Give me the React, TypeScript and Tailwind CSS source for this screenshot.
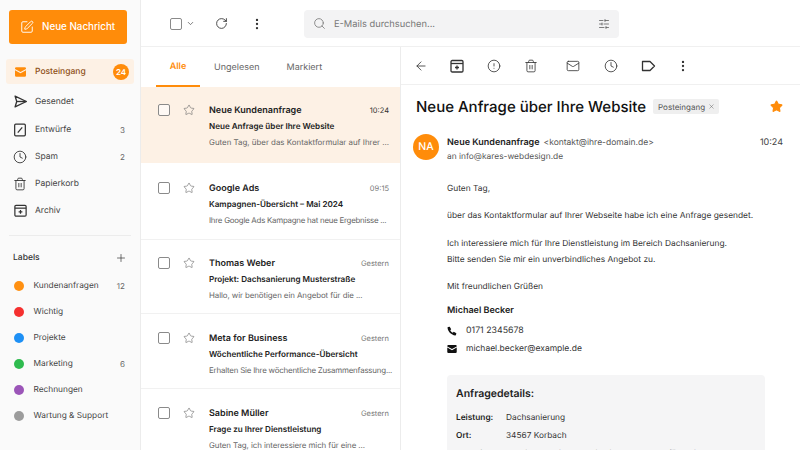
import {
  ArrowLeft,
  ChevronDown,
  CircleAlert,
  Clock,
  EllipsisVertical,
  Mail,
  Plus,
  RotateCw,
  Search,
  SlidersHorizontal,
  SquarePen,
  Star,
  Trash2,
  X,
} from "lucide-react";

function SendIcon() {
  return (
    <svg width="15" height="15" viewBox="0 0 18 18" fill="none" stroke="#333" strokeWidth="1.6" strokeLinejoin="round">
      <path d="M2.5 2.5 16 9 2.5 15.5 4.5 9Z" />
      <path d="M4.5 9H16" />
    </svg>
  );
}

function DraftIcon() {
  return (
    <svg width="16" height="16" viewBox="0 0 18 18" fill="none" stroke="#333" strokeWidth="1.4" strokeLinejoin="round">
      <rect x="3" y="2.5" width="12" height="13" rx="1.2" />
      <path d="M6.5 12 11.5 6" />
    </svg>
  );
}

function ArchiveIcon({ size = 16 }: { size?: number }) {
  return (
    <svg width={size} height={size} viewBox="0 0 16 16" fill="none" stroke="#333" strokeWidth="1.3" strokeLinejoin="round">
      <rect x="2" y="2.5" width="12" height="11.5" rx="1.2" />
      <path d="M2 5.5h12" />
      <path d="M8 7.5v4M6 9.5h4" />
    </svg>
  );
}

function TagIcon() {
  return (
    <svg width="16" height="16" viewBox="0 0 16 16" fill="none" stroke="#333" strokeWidth="1.3" strokeLinejoin="round">
      <path d="M2.5 3.5h7.5L14.5 8 10 12.5H2.5Z" />
    </svg>
  );
}

function Checkbox() {
  return <div className="w-[10px] h-[10px] box-content rounded-[2px] border border-[#8a8a8a] bg-white/60" />;
}

const folders = [
  { name: "Gesendet", icon: <SendIcon />, h: "h-[29px]" },
  { name: "Entwürfe", icon: <DraftIcon />, count: "3", h: "h-[27px]" },
  { name: "Spam", icon: <Clock size={14} strokeWidth={1.5} color="#333" />, count: "2", h: "h-[28px]" },
  { name: "Papierkorb", icon: <Trash2 size={14} strokeWidth={1.5} color="#333" />, h: "h-[26px]" },
  { name: "Archiv", icon: <ArchiveIcon size={15} />, h: "h-[27px]" },
];

const labels = [
  { name: "Kundenanfragen", color: "bg-[#ff9012]", count: "12" },
  { name: "Wichtig", color: "bg-[#f5302f]" },
  { name: "Projekte", color: "bg-[#1e90f5]" },
  { name: "Marketing", color: "bg-[#2fbb4f]", count: "6" },
  { name: "Rechnungen", color: "bg-[#9b55b8]" },
  { name: "Wartung & Support", color: "bg-[#9c9c9c]" },
];

const mails = [
  { from: "Neue Kundenanfrage", time: "10:24", subject: "Neue Anfrage über Ihre Website", preview: "Guten Tag, über das Kontaktformular auf Ihrer ...", h: "h-[76px] pt-[16px] bg-[#fdf1e5]", dark: true, track: "" },
  { from: "Google Ads", time: "09:15", subject: "Kampagnen-Übersicht – Mai 2024", preview: "Ihre Google Ads Kampagne hat neue Ergebnisse ...", h: "h-[77px] pt-[18px]", track: "tracking-[-0.25px]" },
  { from: "Thomas Weber", time: "Gestern", subject: "Projekt: Dachsanierung Musterstraße", preview: "Hallo, wir benötigen ein Angebot für die ...", h: "h-[74px] pt-[16px]", track: "tracking-[-0.08px]" },
  { from: "Meta for Business", time: "Gestern", subject: "Wöchentliche Performance-Übersicht", preview: "Erhalten Sie Ihre wöchentliche Zusammenfassung...", h: "h-[75px] pt-[17px]", track: "tracking-[-0.2px]" },
  { from: "Sabine Müller", time: "Gestern", subject: "Frage zu Ihrer Dienstleistung", preview: "Guten Tag, ich interessiere mich für eine ...", h: "h-[60px] pt-[17px]", track: "tracking-[-0.08px]" },
];

export default function App() {
  return (
    <div className="w-[800px] h-[450px] overflow-hidden flex bg-white text-[#222] font-['Inter',sans-serif] [text-rendering:geometricPrecision]">
      <aside className="w-[141px] shrink-0 h-full bg-[#fafafa] border-r border-[#ececec] flex flex-col">
        <div className="pl-[9px] pt-[10px]">
          <button className="w-[118px] h-[34px] rounded-[3px] bg-[#ff8c0a] text-white flex items-center pl-[11px] gap-[8px] text-[9.8px] font-medium">
            <SquarePen size={14} strokeWidth={1.6} />
            Neue Nachricht
          </button>
        </div>
        <div className="mx-[6px] mt-[15px] h-[25px] rounded-[3px] bg-[#fdf1e5] flex items-center pl-[9px] pr-[5px]">
          <svg width="11" height="10" viewBox="0 0 13 11" fill="#ff8c0a">
            <path d="M1.5 0h10A1.5 1.5 0 0 1 13 1.5v.4L6.5 5.6 0 1.9v-.4A1.5 1.5 0 0 1 1.5 0Z" />
            <path d="M0 3.4l6.5 3.7L13 3.4v6.1a1.5 1.5 0 0 1-1.5 1.5h-10A1.5 1.5 0 0 1 0 9.5Z" />
          </svg>
          <span className="ml-[9px] mt-[1px] text-[8.5px] font-medium text-[#8e4f16]">Posteingang</span>
          <span className="ml-auto w-[16px] h-[16px] rounded-full bg-[#ff8c0a] text-white text-[8px] font-semibold flex items-center justify-center">24</span>
        </div>
        <div className="mt-[3px] flex flex-col">
          {folders.map((f) => (
            <div key={f.name} className={`${f.h} flex items-center pl-[12px] pr-[15px]`}>
              <span className="w-[16px] flex justify-center">{f.icon}</span>
              <span className="ml-[7px] mt-[1px] text-[8.5px] text-[#444]">{f.name}</span>
              {f.count && <span className="ml-auto text-[8px] text-[#666]">{f.count}</span>}
            </div>
          ))}
        </div>
        <div className="mx-[9px] mt-[11px] border-t border-[#ececec]" />
        <div className="mt-[14px] h-[16px] pl-[13px] pr-[13px] flex items-center justify-between">
          <span className="text-[8.5px] font-medium text-[#333]">Labels</span>
          <Plus size={12} strokeWidth={1.4} color="#333" />
        </div>
        <div className="mt-[7px] flex flex-col">
          {labels.map((l) => (
            <div key={l.name} className="h-[26px] flex items-center pl-[14px] pr-[15px]">
              <span className={`w-[9.5px] h-[9.5px] rounded-full ${l.color}`} />
              <span className="ml-[10px] text-[8.3px] text-[#444]">{l.name}</span>
              {l.count && <span className="ml-auto text-[8px] text-[#666]">{l.count}</span>}
            </div>
          ))}
        </div>
      </aside>

      <div className="flex-1 min-w-0 flex flex-col">
        <header className="h-[47px] shrink-0 pt-[1px] flex items-center border-b border-[#f0f0f0]">
          <div className="ml-[29px] w-[10px] h-[10px] box-content rounded-[2px] border border-[#8a8a8a]" />
          <ChevronDown size={9} strokeWidth={2} color="#555" className="ml-[4px]" />
          <RotateCw size={13} strokeWidth={1.6} color="#333" className="ml-[20px]" />
          <EllipsisVertical size={14} strokeWidth={2} color="#333" className="ml-[22px]" />
          <div className="ml-[40px] w-[315px] h-[28px] rounded-[4px] bg-[#f3f3f4] flex items-center pl-[9px] pr-[9px]">
            <Search size={13} strokeWidth={1.5} color="#777" />
            <span className="ml-[8px] mt-[2px] text-[9.3px] text-[#777]">E-Mails durchsuchen...</span>
            <SlidersHorizontal size={12} strokeWidth={1.5} color="#555" className="ml-auto" />
          </div>
        </header>

        <div className="flex-1 min-h-0 flex">
          <section className="w-[260px] shrink-0 border-r border-[#ececec] flex flex-col">
            <nav className="h-[40px] shrink-0 flex items-stretch pl-[15px] text-[9px]">
              <div className="w-[44px] flex items-center justify-center font-semibold text-[#ff8c0a] border-b-2 border-[#ff8c0a] pt-[2px]">Alle</div>
              <div className="ml-[14px] pt-[1px] flex items-center text-[#666]">Ungelesen</div>
              <div className="ml-[27px] pt-[1px] flex items-center text-[#666]">Markiert</div>
            </nav>
            {mails.map((m, i) => (
              <div key={m.from} className={`${m.h} shrink-0 pl-[17px] pr-[11px] flex ${i > 0 && i < 4 ? "border-b border-[#f1f1f1]" : ""}`}>
                <div className="w-[25px] shrink-0 pt-[1px]"><Checkbox /></div>
                <Star size={12} strokeWidth={1.2} color="#666" className="mt-[1px] shrink-0" />
                <div className="ml-[14px] flex-1 min-w-0">
                  <div className="flex items-center justify-between h-[15px]">
                    <span className="text-[9px] font-semibold text-[#222]">{m.from}</span>
                    <span className={`text-[7.5px] ${m.dark ? "text-[#333]" : "text-[#777]"}`}>{m.time}</span>
                  </div>
                  <div className="h-[17px] flex items-center text-[8.1px] font-semibold text-[#222]">{m.subject}</div>
                  <div className={`h-[15px] flex items-center text-[7.9px] text-[#666] whitespace-nowrap ${m.track}`}>{m.preview}</div>
                </div>
              </div>
            ))}
          </section>

          <section className="flex-1 min-w-0 flex flex-col">
            <div className="h-[38px] shrink-0 pt-[1px] flex items-center border-b border-[#f0f0f0] text-[#333]">
              <ArrowLeft size={14} strokeWidth={1.4} className="ml-[13px]" />
              <span className="ml-[21px]"><ArchiveIcon /></span>
              <CircleAlert size={14} strokeWidth={1.4} className="ml-[22px]" />
              <Trash2 size={14} strokeWidth={1.4} className="ml-[23px]" />
              <Mail size={14} strokeWidth={1.4} className="ml-[28px]" />
              <Clock size={14} strokeWidth={1.4} className="ml-[24px]" />
              <span className="ml-[22px]"><TagIcon /></span>
              <EllipsisVertical size={14} strokeWidth={2} className="ml-[20px]" />
            </div>
            <div className="pl-[15px] pr-[17px] mt-[14px] h-[20px] flex items-center">
              <h1 className="text-[15px] font-medium text-[#111] leading-none">Neue Anfrage über Ihre Website</h1>
              <span className="ml-[7px] h-[15px] rounded-[2px] bg-[#efefef] pl-[5px] pr-[4px] flex items-center gap-[3px] text-[8px] text-[#555]">
                Posteingang
                <X size={7} strokeWidth={1.5} />
              </span>
              <Star size={13} fill="#ff8c0a" color="#ff8c0a" className="ml-auto" />
            </div>
            <div className="pl-[12px] pr-[17px] mt-[20px] flex">
              <div className="w-[26px] h-[26px] rounded-full bg-[#ff8c0a] text-white text-[10.5px] font-medium flex items-center justify-center">NA</div>
              <div className="ml-[8px] flex-1 min-w-0 pt-[2px]">
                <div className="flex items-center h-[14px]">
                  <span className="text-[9px] font-semibold text-[#222]">Neue Kundenanfrage</span>
                  <span className="ml-[4px] text-[8.5px] text-[#555]">&lt;kontakt@ihre-domain.de&gt;</span>
                  <span className="ml-auto text-[9px] text-[#444]">10:24</span>
                </div>
                <div className="h-[15px] flex items-center text-[8.4px] text-[#555]">an info@kares-webdesign.de</div>
              </div>
            </div>
            <div className="pl-[46px] pr-[35px] mt-[17px] text-[8.4px] text-[#333] flex flex-col">
              <p className="h-[14px] leading-[14px]">Guten Tag,</p>
              <p className="mt-[13px] h-[14px] leading-[14px] whitespace-nowrap">über das Kontaktformular auf Ihrer Webseite habe ich eine Anfrage gesendet.</p>
              <p className="mt-[14px] h-[14px] leading-[14px] whitespace-nowrap">Ich interessiere mich für Ihre Dienstleistung im Bereich Dachsanierung.</p>
              <p className="mt-[2px] h-[14px] leading-[14px] whitespace-nowrap">Bitte senden Sie mir ein unverbindliches Angebot zu.</p>
              <p className="mt-[13px] h-[14px] leading-[14px]">Mit freundlichen Grüßen</p>
              <p className="mt-[10px] h-[14px] leading-[14px] text-[9px] font-semibold text-[#222]">Michael Becker</p>
              <div className="mt-[6px] h-[14px] flex items-center text-[8.8px]">
                <svg width="10" height="10" viewBox="0 0 24 24" fill="#111">
                  <path d="M6.6 1.5 10 7.8 7.8 10.2c1.2 2.6 3.4 4.8 6 6L16.2 14l6.3 3.4-1 4c-.2.8-1 1.3-1.8 1.2C10.5 22 2 13.5 1.3 4.3 1.2 3.5 1.7 2.7 2.5 2.5Z" />
                </svg>
                <span className="ml-[9px]">0171 2345678</span>
              </div>
              <div className="mt-[4px] h-[14px] flex items-center text-[8.5px]">
                <svg width="10" height="8" viewBox="0 0 13 11" fill="#111">
                  <path d="M1.5 0h10A1.5 1.5 0 0 1 13 1.5v.4L6.5 5.6 0 1.9v-.4A1.5 1.5 0 0 1 1.5 0Z" />
                  <path d="M0 3.4l6.5 3.7L13 3.4v6.1a1.5 1.5 0 0 1-1.5 1.5h-10A1.5 1.5 0 0 1 0 9.5Z" />
                </svg>
                <span className="ml-[9px]">michael.becker@example.de</span>
              </div>
              <div className="mt-[19px] w-[318px] h-[100px] rounded-[4px] bg-[#f5f5f6] pl-[9px] pt-[11px] shrink-0">
                <div className="h-[16px] flex items-center text-[10.5px] font-semibold text-[#222]">Anfragedetails:</div>
                <div className="mt-[9px] h-[14px] flex items-center text-[8.3px]">
                  <span className="w-[50px] font-semibold text-[#222]">Leistung:</span>
                  <span>Dachsanierung</span>
                </div>
                <div className="mt-[4px] h-[14px] flex items-center text-[8.3px]">
                  <span className="w-[50px] font-semibold text-[#222]">Ort:</span>
                  <span>34567 Korbach</span>
                </div>
                <div className="mt-[4px] h-[14px] flex items-center text-[8.3px]">
                  <span className="w-[50px] font-semibold text-[#222]">Nachricht:</span>
                  <span>Ich bitte um ein unverbindliches Angebot für mein Dach.</span>
                </div>
              </div>
            </div>
          </section>
        </div>
      </div>
    </div>
  );
}
